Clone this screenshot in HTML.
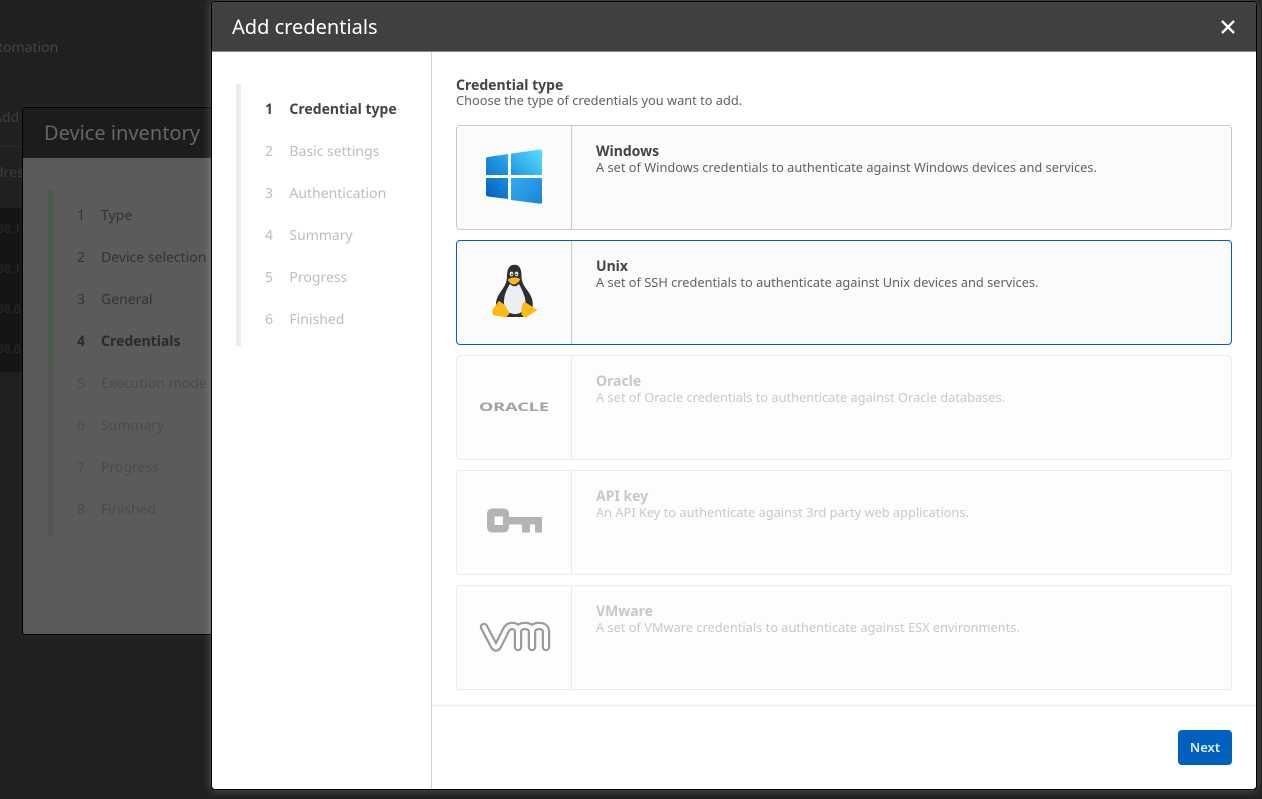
<!DOCTYPE html>
<html><head><meta charset="utf-8"><style>
html,body{margin:0;padding:0;width:1262px;height:799px;overflow:hidden;background:#202020;font-family:"Noto Sans","Open Sans","DejaVu Sans",sans-serif}
div,span{position:absolute;box-sizing:border-box;white-space:nowrap}
.t{line-height:18px;font-size:14px}
.card{left:456px;width:776px;height:105px;background:#fbfbfb;border:1px solid #c9c9c9;border-radius:4px}
.card .d{left:114px;top:0;bottom:0;width:1px;background:#c9c9c9}
.card .h{left:139px;top:17px;font-size:14px;font-weight:700;line-height:18px;color:#444}
.card .p{left:139px;top:33px;font-size:12.8px;line-height:17px;color:#616161}
.off{border-color:#ebebeb;background:#fdfdfd}.off .d{background:#ebebeb}.off .h{color:#c8c8c8}.off .p{color:#c8c8c8}
svg{position:absolute;left:0;top:0}
</style></head><body>
<span class="t" style="left:-2px;top:39px;color:#454545;font-size:14px">tomation</span>
<span class="t" style="left:-7px;top:109px;color:#3d3d3d;font-size:14px">Add</span>
<span class="t" style="left:-5px;top:164px;color:#3d3d3d;font-size:14px">dres</span>
<div style="left:0;top:146px;width:23px;height:1px;background:#2a2a2a"></div>
<div style="left:0;top:208px;width:23px;height:164px;background:#151515"></div>
<span class="t" style="left:-3px;top:220px;color:#2b2b2b;font-size:12px">68.1</span>
<span class="t" style="left:-3px;top:260px;color:#2b2b2b;font-size:12px">68.1</span>
<span class="t" style="left:-3px;top:300px;color:#2b2b2b;font-size:12px">68.6</span>
<span class="t" style="left:-3px;top:340px;color:#2b2b2b;font-size:12px">68.6</span>

<div style="left:22px;top:107px;width:220px;height:528px;background:#5b5b5b;border:1px solid #000;border-radius:3px;overflow:hidden;box-shadow:0 0 8px rgba(255,255,255,.05)">
  <div style="left:0;top:0;width:220px;height:50px;background:#1c1c1c"></div>
  <span style="left:21px;top:11px;font-size:20px;line-height:28px;color:#666">Device inventory</span>
  <div style="left:25px;top:82px;width:5px;height:173px;background:#475c47"></div>
  <div style="left:25px;top:255px;width:5px;height:173px;background:#535353"></div>
  <span class="t" style="left:54px;top:99px;color:#333">1</span><span class="t" style="left:78px;top:99px;color:#333">Type</span>
  <span class="t" style="left:54px;top:141px;color:#333">2</span><span class="t" style="left:78px;top:141px;color:#333">Device selection</span>
  <span class="t" style="left:54px;top:183px;color:#333">3</span><span class="t" style="left:78px;top:183px;color:#333">General</span>
  <span class="t" style="left:54px;top:225px;color:#2b2b2b;font-weight:700">4</span><span class="t" style="left:78px;top:225px;color:#2b2b2b;font-weight:700">Credentials</span>
  <span class="t" style="left:54px;top:267px;color:#4a4a4a">5</span><span class="t" style="left:78px;top:267px;color:#4a4a4a">Execution mode</span>
  <span class="t" style="left:54px;top:309px;color:#4a4a4a">6</span><span class="t" style="left:78px;top:309px;color:#4a4a4a">Summary</span>
  <span class="t" style="left:54px;top:351px;color:#4a4a4a">7</span><span class="t" style="left:78px;top:351px;color:#4a4a4a">Progress</span>
  <span class="t" style="left:54px;top:393px;color:#4a4a4a">8</span><span class="t" style="left:78px;top:393px;color:#4a4a4a">Finished</span>
</div>

<div style="left:211px;top:1px;width:1046px;height:789px;background:#fff;border:1px solid #000;border-radius:4px;box-shadow:0 0 9px 1px rgba(255,255,255,.22);overflow:hidden">
  <div style="left:0;top:0;width:1044px;height:50px;background:#404040;border-bottom:1px solid #8a8a8a"></div>
  <span style="left:20px;top:11px;font-size:20px;line-height:28px;color:#fff">Add credentials</span>
  <svg style="left:1008px;top:17px" width="16" height="16" viewBox="0 0 16 16"><path d="M2 2L14 14M14 2L2 14" stroke="#fff" stroke-width="2.3" fill="none"/></svg>
  <div style="left:219px;top:50px;width:1px;height:737px;background:#d0d0d0"></div>
  <div style="left:24px;top:82px;width:5px;height:262px;background:#ececec"></div>
  <span class="t" style="left:53px;top:99px;color:#444;font-weight:700">1</span><span class="t" style="left:77.400px;top:99px;color:#444;font-weight:700">Credential type</span>
  <span class="t" style="left:53px;top:141px;color:#bdbdbd">2</span><span class="t" style="left:77.400px;top:141px;color:#bdbdbd">Basic settings</span>
  <span class="t" style="left:53px;top:183px;color:#bdbdbd">3</span><span class="t" style="left:77.400px;top:183px;color:#bdbdbd">Authentication</span>
  <span class="t" style="left:53px;top:225px;color:#bdbdbd">4</span><span class="t" style="left:77.400px;top:225px;color:#bdbdbd">Summary</span>
  <span class="t" style="left:53px;top:267px;color:#bdbdbd">5</span><span class="t" style="left:77.400px;top:267px;color:#bdbdbd">Progress</span>
  <span class="t" style="left:53px;top:309px;color:#bdbdbd">6</span><span class="t" style="left:77.400px;top:309px;color:#bdbdbd">Finished</span>
  <div style="left:220px;top:703px;width:824px;height:1px;background:#eee"></div>
  <div style="left:966px;top:728px;width:54px;height:35px;background:#0060bf;border-radius:4px;color:#e6effa;font-size:13px;font-weight:600;line-height:35px;text-align:center">Next</div>
</div>

<span style="left:456px;top:77px;font-size:14px;font-weight:700;line-height:18px;color:#444">Credential type</span>
<span style="left:456px;top:92px;font-size:12.8px;line-height:17px;color:#616161">Choose the type of credentials you want to add.</span>

<div class="card" style="top:125px"><div class="d"></div><span class="h">Windows</span><span class="p">A set of Windows credentials to authenticate against Windows devices and services.</span></div>
<div class="card" style="top:240px;border-color:#0060bf"><div class="d"></div><span class="h">Unix</span><span class="p">A set of SSH credentials to authenticate against Unix devices and services.</span></div>
<div class="card off" style="top:355px"><div class="d"></div><span class="h">Oracle</span><span class="p">A set of Oracle credentials to authenticate against Oracle databases.</span></div>
<div class="card off" style="top:470px"><div class="d"></div><span class="h">API key</span><span class="p">An API Key to authenticate against 3rd party web applications.</span></div>
<div class="card off" style="top:585px"><div class="d"></div><span class="h">VMware</span><span class="p">A set of VMware credentials to authenticate against ESX environments.</span></div>

<svg width="1262" height="799" viewBox="0 0 1262 799">
  <defs>
    <linearGradient id="w" gradientUnits="userSpaceOnUse" x1="542" y1="150" x2="486" y2="204"><stop offset="0" stop-color="#5bdcff"/><stop offset=".5" stop-color="#2196e0"/><stop offset="1" stop-color="#0059b8"/></linearGradient>
    <linearGradient id="w2" gradientUnits="userSpaceOnUse" x1="511" y1="178" x2="542" y2="204"><stop offset="0" stop-color="#35aaf0"/><stop offset="1" stop-color="#1a85d8"/></linearGradient>
  </defs>
  <path d="M488 157L508 154V175H486V159Q486 157 488 157Z" fill="url(#w)"/>
  <path d="M511 153.600L540 149.500Q542 149.300 542 151.500V175H511Z" fill="url(#w)"/>
  <path d="M486 178H508V199L488 196.500Q486 196.300 486 194Z" fill="url(#w)"/>
  <path d="M511 178H542V202Q542 204 540 203.700L511 200Z" fill="url(#w2)"/>

  <path d="M507 276C507 268 510 264.700 514.500 264.700C519 264.700 521.500 268 521.500 276C521.500 283 525 287 528.500 292C532 297 534 303 532 309L523 317H506L497 309C494.500 303 497 297 500.500 292C504 287 507 283 507 276Z" fill="#2a3034"/>
  <path d="M510 284C506 290 503.500 297 504 304C504.500 310 509 314 515 314C521 314 525.500 310 525.500 304C526 297 522 290 519 284C516 287 513 287 510 284Z" fill="#eceff2"/>
  <ellipse cx="511.500" cy="274" rx="1.800" ry="2.400" fill="#eef0f3"/><ellipse cx="516.500" cy="274" rx="1.800" ry="2.400" fill="#eef0f3"/>
  <circle cx="511.800" cy="274.500" r=".9" fill="#222"/><circle cx="516.200" cy="274.500" r=".9" fill="#222"/>
  <path d="M508 279.500C511 277 517 277 520 279C520.500 281 516 284.500 514 284.500C512 284.500 508 282 508 279.500Z" fill="#fdb813"/>
  <path d="M499 301.500L492.500 310.700L493.500 314.800L506 316.800L509 313.300L504.300 305Z" fill="#fdb813" stroke="#fdb813" stroke-linejoin="round"/>
  <path d="M524.300 302.200L536.500 310L526 316.800L522 314.800L522 306.700Z" fill="#fdb813" stroke="#fdb813" stroke-linejoin="round"/>

  <text x="479" y="411" font-family="'Noto Sans',sans-serif" font-size="12" font-weight="700" fill="#a3a3a3" textLength="70" lengthAdjust="spacingAndGlyphs">ORACLE</text>

  <path fill-rule="evenodd" fill="#b3b3b3" d="M493 508.500H503Q509 508.500 509 514.500V517H542V532.500H535V524.500H530V532.500H522V524.500H509V526.500Q509 532.500 503 532.500H493Q487 532.500 487 526.500V514.500Q487 508.500 493 508.500ZM494.500 516.500V525H503V516.500Z"/>

  <g fill="none" stroke-linecap="round" stroke-linejoin="round">
    <path d="M484 627L494 646Q496 649 498 646L506 630Q508 626 512 626Q518 626 518 632V647V632Q518 626 525 626Q532 626 532 632V647V632Q532 626 539 626Q546 626 546 632V647" stroke="#9c9c9c" stroke-width="8.500"/>
    <path d="M484 627L494 646Q496 649 498 646L506 630Q508 626 512 626Q518 626 518 632V647V632Q518 626 525 626Q532 626 532 632V647V632Q532 626 539 626Q546 626 546 632V647" stroke="#fdfdfd" stroke-width="4"/>
  </g>
</svg>
</body></html>
